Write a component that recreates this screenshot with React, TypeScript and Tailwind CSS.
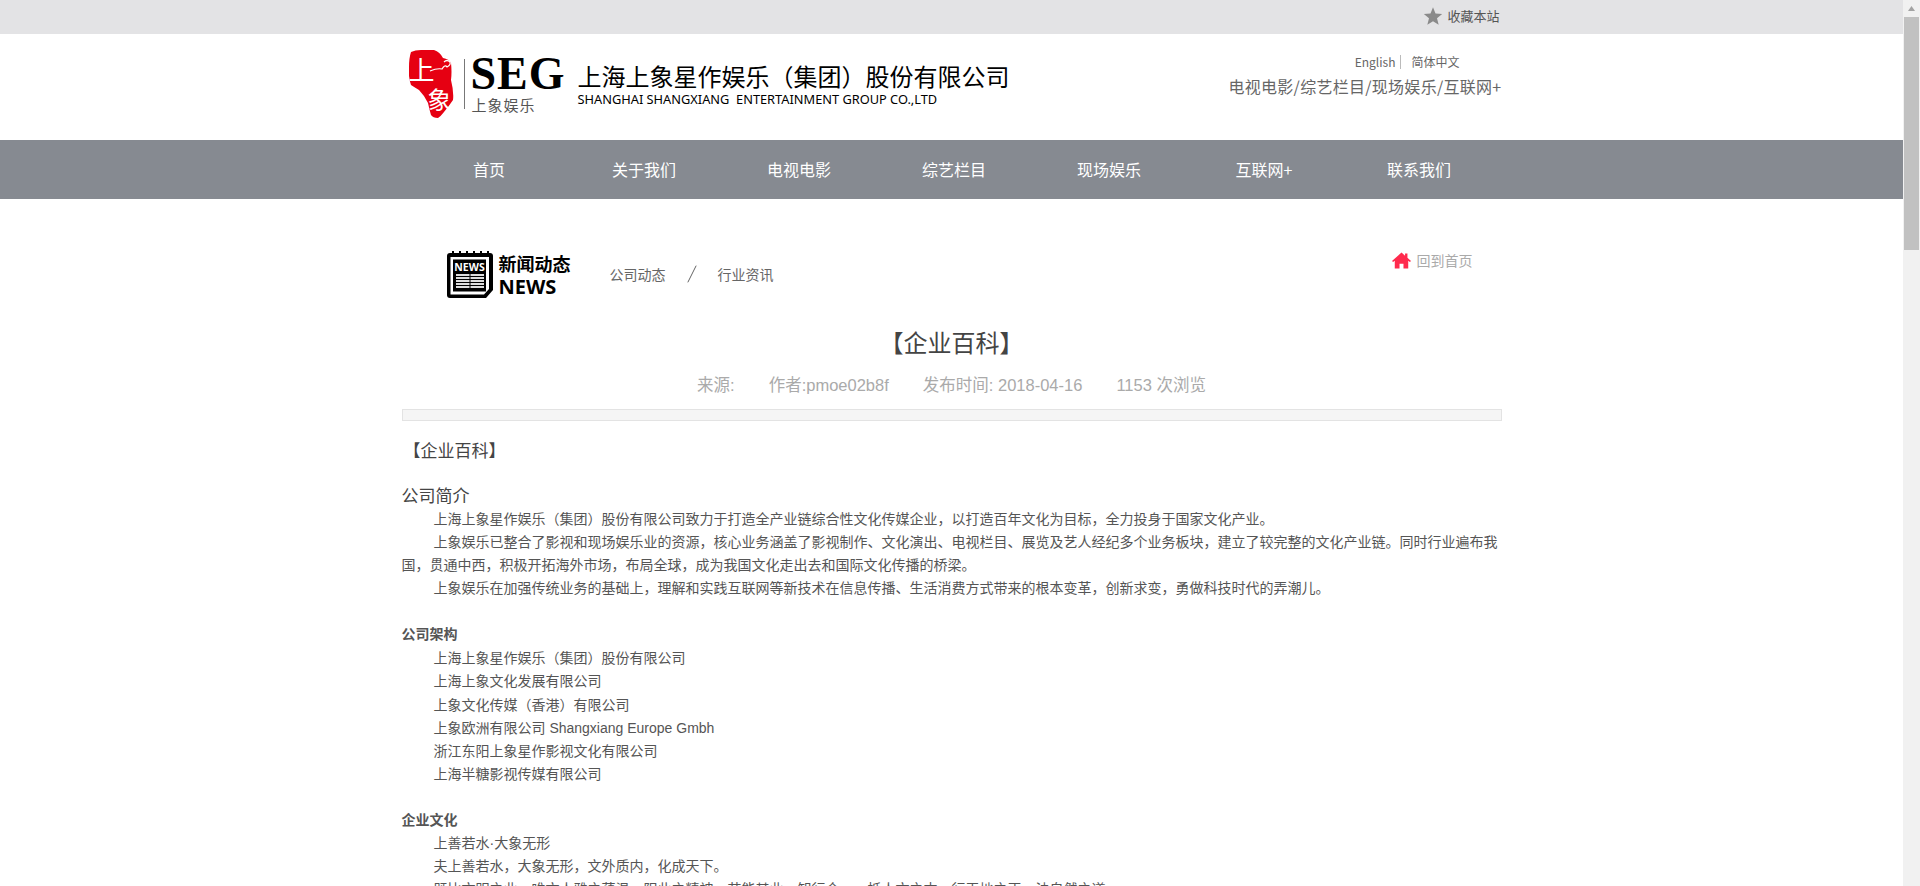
const bodyFont = "font-['Liberation_Sans','Noto_Sans_CJK_SC',sans-serif]";

function Paren({ c }: { c: string }) {
  return <span className="font-['Noto_Sans_CJK_TC',sans-serif]">{c}</span>;
}

function SealLogo() {
  return (
    <div className="flex h-[70px] items-center">
      <div className="relative h-[69px] w-[45px] overflow-hidden font-['Noto_Sans_CJK_SC',sans-serif] text-white">
        <svg viewBox="0 0 45 69" className="h-full w-full">
          <path d="M2 2 Q6 0 12 0 L25 0 Q31 2 34 8 Q40 9 42 13 Q43 22 42 30 Q45 42 44 50 Q40 56 35 62 Q32 66 29 68 Q24 68 22 65 Q20 58 19 53 Q15 45 10 40 Q5 37 2 35 Q-1 26 0 17 Q0 8 2 2 Z" fill="#e60012" />
          <path d="M21 21 Q28 18 33 19 Q36 14 38 17 Q42 15 41 12 Q38 9 35 12" fill="none" stroke="#fff" strokeWidth="1.2" />
        </svg>
        <span className="absolute top-[4px] left-0 text-[26px] leading-[30px]">上</span>
        <span className="absolute top-[34px] left-[19px] text-[24px] leading-[30px]">象</span>
      </div>
      <div className="ml-[10px] mr-[6px] h-[50px] w-px bg-[#777]" />
      <div className="flex flex-col">
        <span className="font-['Liberation_Serif',serif] text-[46px] leading-[36px] font-bold tracking-[1px] text-black">SEG</span>
        <span className="mt-[5px] ml-[1px] font-['Noto_Sans_CJK_SC',sans-serif] text-[15px] leading-[15px] tracking-[1px] text-[#555]">上象娱乐</span>
      </div>
    </div>
  );
}

function NewsIcon() {
  return (
    <svg viewBox="0 0 46 48" className="h-[48px] w-[46px]">
      <path d="M3 2 H43 Q46 2 46 5 V39 L39 47 H3 Q0 47 0 44 V5 Q0 2 3 2 Z" fill="#000" />
      <path d="M6 0 v4 M13 0 v4 M20 0 v4 M27 0 v4 M34 0 v4 M41 0 v4" stroke="#000" strokeWidth="2" />
      <path d="M3.5 6 H42 V38 L37 43.5 H3.5 Z" fill="#fff" />
      <rect x="6" y="8.5" width="33" height="32" fill="#000" />
      <text x="22.5" y="19.5" textAnchor="middle" fontFamily="Open Sans, sans-serif" fontWeight="700" fontSize="10.5" fill="#fff">NEWS</text>
      <rect x="9" y="23" width="28" height="14" fill="#ddd" />
      <path d="M9 25.5 H37 M9 28.5 H37 M9 31.5 H37 M9 34.5 H37 M23 23 V37" stroke="#000" strokeWidth="1" />
    </svg>
  );
}

const nav = ["首页", "关于我们", "电视电影", "综艺栏目", "现场娱乐", "互联网+", "联系我们"];

export default function App() {
  return (
    <div className={`flex h-[886px] w-full overflow-hidden bg-white ${bodyFont}`}>
      <div className="h-full min-w-0 flex-1 overflow-hidden">
        <div className="flex h-[34px] justify-center bg-[#e3e3e5]">
          <div className="flex w-[1100px] items-center justify-end pr-[2px] pb-[2px]">
            <svg viewBox="0 0 24 24" className="mr-[4px] h-[20px] w-[20px]" fill="#8a8a8a">
              <path d="M12 1.5 L15 9 L23 9.6 L16.8 14.7 L18.8 22.5 L12 18.3 L5.2 22.5 L7.2 14.7 L1 9.6 L9 9 Z" />
            </svg>
            <span className="font-['Noto_Sans_CJK_SC',sans-serif] text-[13px] text-[#555]">收藏本站</span>
          </div>
        </div>

        <div className="flex h-[106px] justify-center">
          <div className="flex w-[1100px] items-start justify-between">
            <div className="mt-[15px] ml-[7px] flex">
              <SealLogo />
              <div className="mt-[12px] ml-[12px] text-black">
                <div className="font-['Noto_Sans_CJK_SC',sans-serif] text-[24px] leading-[30px] whitespace-nowrap">上海上象星作娱乐<Paren c="（" />集团<Paren c="）" />股份有限公司</div>
                <div className="font-['Noto_Sans',sans-serif] text-[12.8px] leading-[16px] whitespace-pre">SHANGHAI SHANGXIANG  ENTERTAINMENT GROUP CO.,LTD</div>
              </div>
            </div>
            <div className="mt-[21px] flex flex-col items-end font-['Noto_Sans_CJK_SC',sans-serif] text-[#666]">
              <div className="mr-[42px] flex items-center text-[12px] leading-[14px]">
                <span className="border-r border-[#bbb] pr-[5px]">English</span>
                <span className="pl-[10px]">简体中文</span>
              </div>
              <div className="mt-[6px] text-[16px] leading-[22px] tracking-[0.28px] whitespace-nowrap">电视电影/综艺栏目/现场娱乐/互联网+</div>
            </div>
          </div>
        </div>

        <div className="flex h-[59px] justify-center bg-[#868a91]">
          <div className="ml-[5px] flex w-[1085px] font-['Noto_Sans_CJK_SC',sans-serif] text-[16px] leading-[59px] text-white">
            {nav.map((n) => (
              <div key={n} className="w-[155px] text-center">{n}</div>
            ))}
          </div>
        </div>

        <div className="mx-auto w-[1100px]">
          <div className="flex h-[127px] items-start pt-[52px]">
            <div className="ml-[45px]"><NewsIcon /></div>
            <div className="ml-[6px] flex w-[100px] flex-col font-['Noto_Sans_CJK_SC',sans-serif] text-[18px] leading-[24px] font-bold text-black">
              <span>新闻动态</span>
              <span className="font-['Open_Sans',sans-serif] text-[20px]">NEWS</span>
            </div>
            <div className="ml-[11px] flex items-center font-['Noto_Sans_CJK_SC',sans-serif] text-[14px] leading-[22px] text-[#666]">
              <div className="mt-[12px] flex items-center">
                <span>公司动态</span>
                <svg viewBox="0 0 12 22" className="mx-[21px] h-[22px] w-[10px]"><path d="M1 21 L11 1" stroke="#555" strokeWidth="1.1" /></svg>
                <span>行业资讯</span>
              </div>
            </div>
            <div className="ml-auto mr-[29px] -mt-[2px] flex items-center font-['Noto_Sans_CJK_SC',sans-serif] text-[14px] leading-[22px] text-[#aaa]">
              <svg viewBox="0 0 24 24" className="mr-[6px] h-[19px] w-[19px]" fill="#ff2a4d">
                <path d="M12 2 L16.5 6 V3 H19.5 V8.6 L24 12.6 L22.6 14 L20.5 12.2 V22 H14.5 V16 H9.5 V22 H3.5 V12.2 L1.4 14 L0 12.6 Z" />
              </svg>
              回到首页
            </div>
          </div>

          <h1 className="text-center font-['Noto_Sans_CJK_SC',sans-serif] text-[24px] leading-[32px] font-normal text-[#444]">【企业百科】</h1>
          <div className="mt-[15px] flex justify-center gap-[34px] text-[16.5px] leading-[24px] text-[#aaa]">
            <span>来源:</span>
            <span>作者:pmoe02b8f</span>
            <span>发布时间: 2018-04-16</span>
            <span>1153 次浏览</span>
          </div>
          <div className="mt-[12px] h-[12px] border border-[#e3e3e3] bg-[#f5f5f5]" />

          <div className="mt-[19px] text-[14px] leading-[23px] text-[#555]">
            <p className="pl-[2px] text-[17px] text-[#444]">【企业百科】</p>
            <p className="mt-[23px] text-[17px] leading-[22px] text-[#444]">公司简介</p>
            <p className="indent-[32px]">上海上象星作娱乐（集团）股份有限公司致力于打造全产业链综合性文化传媒企业，以打造百年文化为目标，全力投身于国家文化产业。</p>
            <p className="indent-[32px]">上象娱乐已整合了影视和现场娱乐业的资源，核心业务涵盖了影视制作、文化演出、电视栏目、展览及艺人经纪多个业务板块，建立了较完整的文化产业链。同时行业遍布我国，贯通中西，积极开拓海外市场，布局全球，成为我国文化走出去和国际文化传播的桥梁。</p>
            <p className="indent-[32px]">上象娱乐在加强传统业务的基础上，理解和实践互联网等新技术在信息传播、生活消费方式带来的根本变革，创新求变，勇做科技时代的弄潮儿。</p>
            <p className="mt-[23px] font-bold">公司架构</p>
            <div className="pl-[32px]">
              <p>上海上象星作娱乐<Paren c="（" />集团<Paren c="）" />股份有限公司</p>
              <p>上海上象文化发展有限公司</p>
              <p>上象文化传媒<Paren c="（" />香港<Paren c="）" />有限公司</p>
              <p>上象欧洲有限公司 Shangxiang Europe Gmbh</p>
              <p>浙江东阳上象星作影视文化有限公司</p>
              <p>上海半糖影视传媒有限公司</p>
            </div>
            <p className="mt-[23px] font-bold">企业文化</p>
            <div className="pl-[32px]">
              <p>上善若水·大象无形</p>
              <p>夫上善若水，大象无形，文外质内，化成天下。</p>
              <p>既比文明之业，唯文人雅之蕴温，阳此之精神，艺能其业，知行合一，抵人文之本，行天地之正，法自然之道</p>
            </div>
          </div>
        </div>
      </div>

      <div className="flex h-full w-[17px] flex-col items-center bg-[#f1f1f1]">
        <svg viewBox="0 0 17 17" className="h-[17px] w-[17px]"><path d="M8.5 6 L12 11 H5 Z" fill="#a3a3a3" /></svg>
        <div className="h-[233px] w-[15px] bg-[#c1c1c1]" />
      </div>
    </div>
  );
}
